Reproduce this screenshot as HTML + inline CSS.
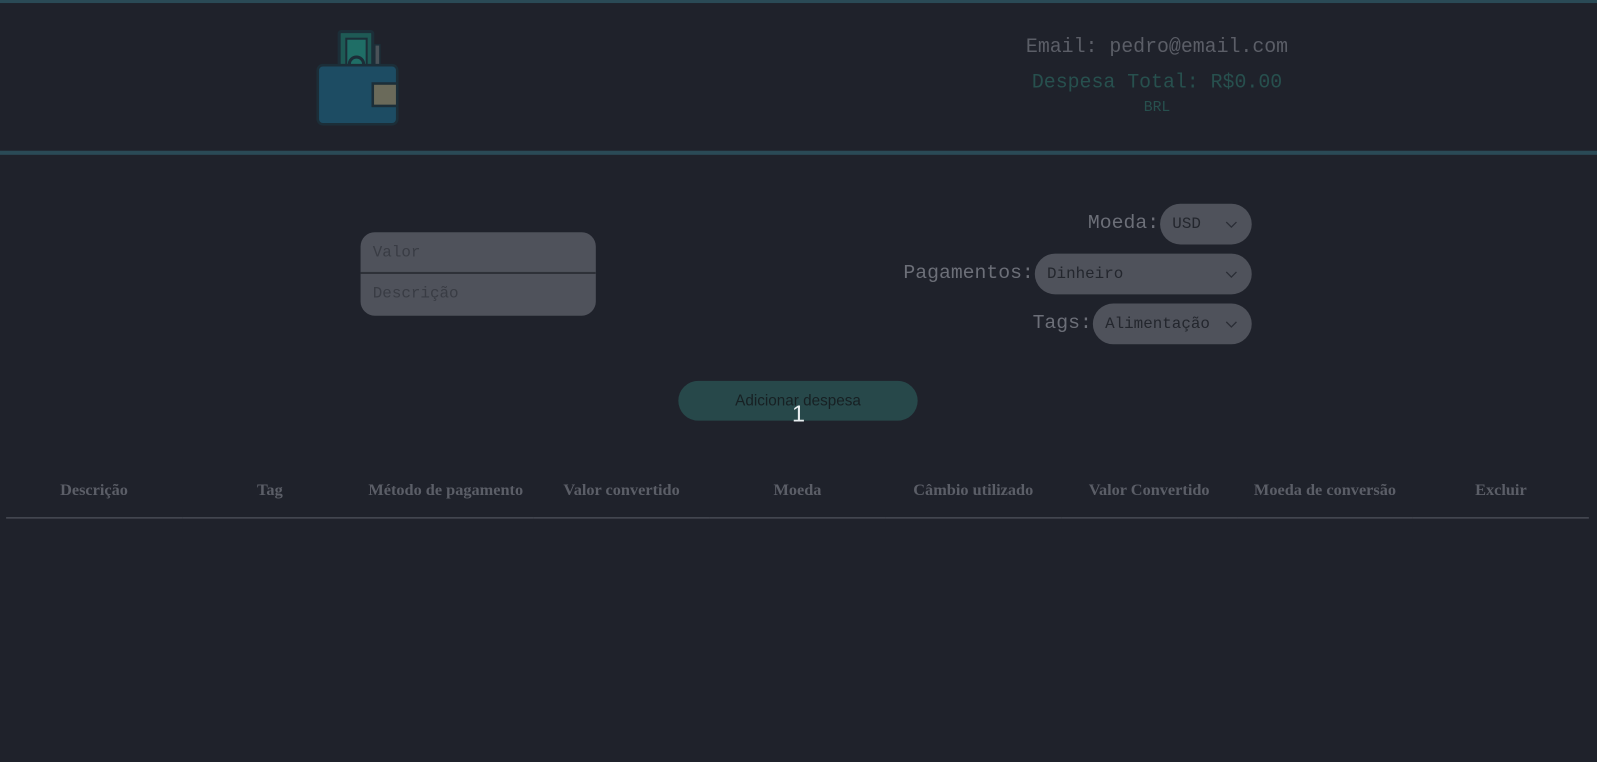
<!DOCTYPE html>
<html><head><meta charset="utf-8"><style>
*{box-sizing:border-box;margin:0;padding:0}
body{width:1597px;height:762px;background:#1f222b;overflow:hidden;font-family:"Liberation Mono",monospace}
#w{position:relative;width:1568px;height:748px;transform:scale(1.01850);transform-origin:0 0}
.abs{position:absolute}
.sel{position:absolute;background:#4f525b;border-radius:20px;height:40px;color:#23262d;font-size:15.6px;line-height:40px;padding-left:12px}
.sel svg{position:absolute;right:14px;top:17px}
.lbl{position:absolute;color:#6c6f78;font-size:19.4px;text-align:right}
th{font-family:"Liberation Serif",serif;font-weight:bold;color:#5b5e67;font-size:16px;width:172.7px;text-align:center}
</style></head><body><div id="w">
<div class="abs" style="left:0;top:0;width:1568px;height:3px;background:#2a4a56"></div>
<div class="abs" style="left:0;top:148px;width:1568px;height:4px;background:#2a4a56"></div>
<svg class="abs" style="left:309px;top:28px" width="84" height="96" viewBox="0 0 82 96">
<rect x="23" y="3" width="33" height="36" rx="2" fill="#1e5a55" stroke="#1c2e38" stroke-width="3"/>
<rect x="30" y="10" width="20" height="26" fill="#1f6e66" stroke="#1c2e38" stroke-width="2"/>
<path d="M33 35a7 7 0 0 1 14 0" fill="none" stroke="#1c2e38" stroke-width="3"/>
<rect x="58" y="16" width="5" height="20" fill="#4a5258" stroke="#1c2e38" stroke-width="1.5"/>
<rect x="2" y="36" width="78" height="58" rx="5" fill="#1d4c63" stroke="#1c2e38" stroke-width="2.5"/>
<rect x="56" y="54" width="24" height="22" fill="#6a6a5a" stroke="#1c2e38" stroke-width="2.5"/>
</svg>
<div class="abs" style="left:986px;top:35px;width:300px;text-align:center;font-size:19.5px;color:#5b5e67">Email: pedro@email.com</div>
<div class="abs" style="left:986px;top:70px;width:300px;text-align:center;font-size:19.5px;color:#27504e">Despesa Total: R$0.00</div>
<div class="abs" style="left:986px;top:98px;width:300px;text-align:center;font-size:14.5px;color:#27504e">BRL</div>

<div class="abs" style="left:354px;top:228px;width:231px;height:82px;background:#4f525b;border-radius:14px;overflow:hidden">
<div style="height:41px;border-bottom:2px solid #2e3138;padding-left:12px;line-height:40px;color:#393c44;font-size:15.6px">Valor</div>
<div style="padding-left:12px;line-height:38px;color:#393c44;font-size:15.6px">Descrição</div>
</div>

<div class="lbl" style="left:900px;width:238px;top:208px">Moeda:</div>
<div class="sel" style="left:1139px;top:200px;width:90px">USD<svg width="12" height="8"><path d="M1 1l5 5 5-5" fill="none" stroke="#2a2d35" stroke-width="1.3"/></svg></div>
<div class="lbl" style="left:800px;width:215px;top:257px">Pagamentos:</div>
<div class="sel" style="left:1016px;top:249px;width:213px">Dinheiro<svg width="12" height="8"><path d="M1 1l5 5 5-5" fill="none" stroke="#2a2d35" stroke-width="1.3"/></svg></div>
<div class="lbl" style="left:900px;width:172px;top:306px">Tags:</div>
<div class="sel" style="left:1073px;top:298px;width:156px">Alimentação<svg width="12" height="8"><path d="M1 1l5 5 5-5" fill="none" stroke="#2a2d35" stroke-width="1.3"/></svg></div>

<div class="abs" style="left:666px;top:374px;width:235px;height:39px;border-radius:20px;background:#27484a;text-align:center;line-height:39px;font-family:'Liberation Sans',sans-serif;font-size:15px;color:#172023">Adicionar despesa</div>
<div class="abs" style="left:764px;top:393px;width:40px;text-align:center;font-family:'Liberation Sans',sans-serif;font-size:23px;color:#e8eef0">1</div>

<table class="abs" style="left:6px;top:456px;width:1554px;border-collapse:collapse">
<tr style="height:52px;border-bottom:1.5px solid #5b5e67"><th>Descrição</th><th>Tag</th><th>Método de pagamento</th><th>Valor convertido</th><th>Moeda</th><th>Câmbio utilizado</th><th>Valor Convertido</th><th>Moeda de conversão</th><th>Excluir</th></tr>
</table>
</div></body></html>
